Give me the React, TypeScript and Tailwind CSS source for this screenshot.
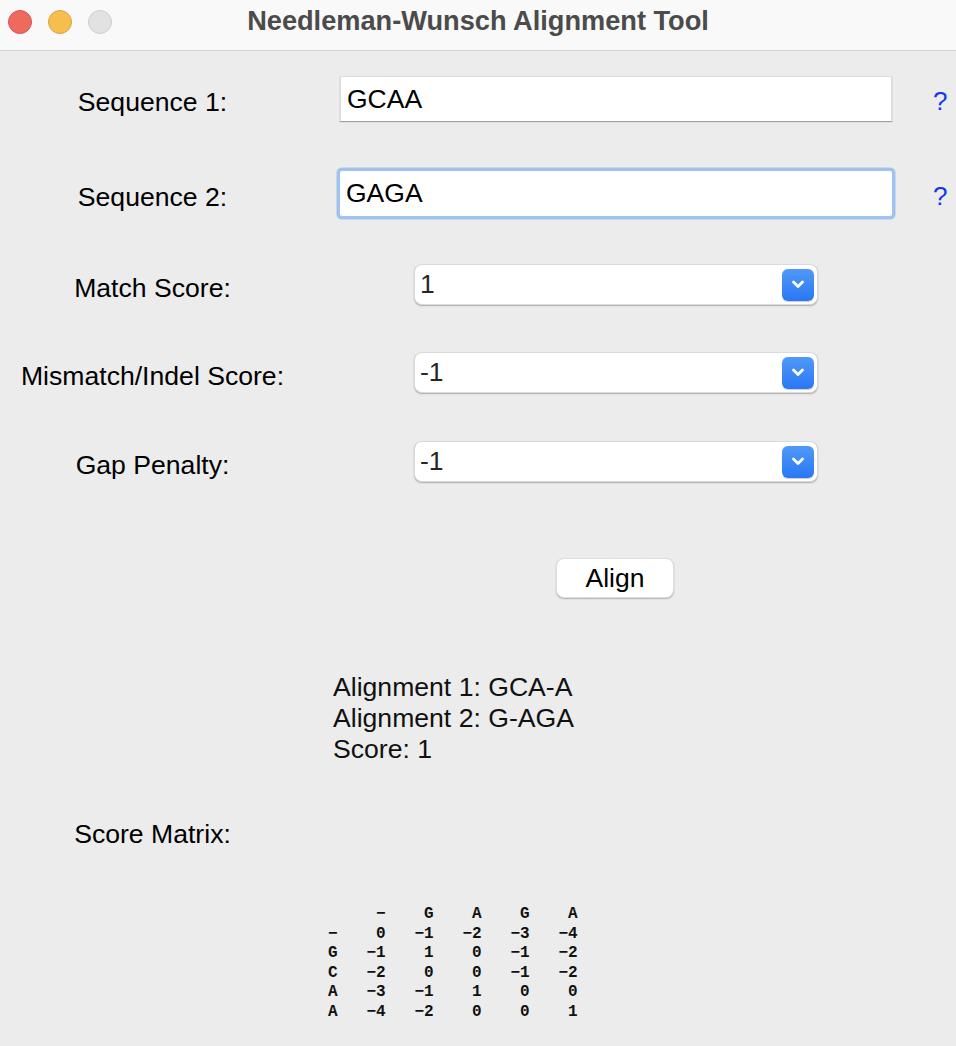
import React from "react";

const SANS = { fontFamily: '"Liberation Sans", Arial, sans-serif' };

function Chevron() {
  return (
    <svg width="14" height="9" viewBox="0 0 14 9" fill="none">
      <path d="M2.5 2 L7 6.5 L11.5 2" stroke="white" strokeWidth="2.8" strokeLinecap="round" strokeLinejoin="round" />
    </svg>
  );
}

function Dropdown({ value }: { value: string }) {
  return (
    <div className="ml-[109px] w-[404px] h-[41px] bg-white rounded-[8px] border border-[#dadada] shadow-[0_1px_1.5px_rgba(0,0,0,0.28)] flex items-center justify-between pl-[5px] pr-[3px]">
      <span className="text-[26.5px] text-[#262626] leading-none">{value}</span>
      <div className="w-[32px] h-[32px] rounded-[6px] bg-gradient-to-b from-[#5099f8] to-[#2a77f4] flex items-center justify-center shadow-[0_0.5px_1px_rgba(0,0,0,0.2)]">
        <Chevron />
      </div>
    </div>
  );
}

function Label({ text }: { text: string }) {
  return (
    <div className="w-[305px] shrink-0 text-center text-[26.6px] text-black pt-[7px] leading-none">{text}</div>
  );
}

const matrix = [
  "     \u2212    G    A    G    A",
  "\u2212    0   \u22121   \u22122   \u22123   \u22124",
  "G   \u22121    1    0   \u22121   \u22122",
  "C   \u22122    0    0   \u22121   \u22122",
  "A   \u22123   \u22121    1    0    0",
  "A   \u22124   \u22122    0    0    1",
];

export default function App() {
  return (
    <div className="w-[956px] h-[1046px] bg-[#ececec] overflow-hidden" style={SANS}>
      {/* Title bar */}
      <div className="h-[51px] bg-[#f9f9f9] border-b border-[#d3d3d3] grid grid-cols-[1fr_auto_1fr] items-center pb-[8px]">
        <div className="flex items-center gap-[16px] pl-[8px] pt-[2px]">
          <div className="w-[24px] h-[24px] rounded-full bg-[#ee6a5f] border border-[#d8564c]" />
          <div className="w-[24px] h-[24px] rounded-full bg-[#f5be4f] border border-[#d9a443]" />
          <div className="w-[24px] h-[24px] rounded-full bg-[#e2e2e2] border border-[#cdcdcd]" />
        </div>
        <div className="text-[27.2px] font-bold text-[#4b4b4b] leading-none">Needleman-Wunsch Alignment Tool</div>
        <div />
      </div>

      {/* Sequence 1 */}
      <div className="mt-[25px] h-[45px] flex items-center">
        <Label text="Sequence 1:" />
        <div className="ml-[35px] w-[552px] h-[45px] bg-white border-t border-x border-[#dcdcdc] shadow-[0_1px_1px_rgba(0,0,0,0.32)] flex items-center pl-[6px]">
          <span className="text-[26.5px] text-black leading-none">GCAA</span>
        </div>
        <span className="ml-[41px] text-[26px] text-[#1238ee] leading-none pt-[4px]">?</span>
      </div>

      {/* Sequence 2 */}
      <div className="mt-[50px] h-[45px] flex items-center">
        <Label text="Sequence 2:" />
        <div className="ml-[35px] w-[552px] h-[45px] bg-white rounded-[2px] shadow-[0_0_0_3.5px_#9fc2ef] flex items-center pl-[6px]">
          <span className="text-[26.5px] text-black leading-none">GAGA</span>
        </div>
        <span className="ml-[41px] text-[26px] text-[#1238ee] leading-none pt-[4px]">?</span>
      </div>

      {/* Match score */}
      <div className="mt-[48px] h-[41px] flex items-center">
        <Label text="Match Score:" />
        <Dropdown value="1" />
      </div>

      <div className="mt-[47px] h-[41px] flex items-center">
        <Label text="Mismatch/Indel Score:" />
        <Dropdown value="-1" />
      </div>

      <div className="mt-[48px] h-[41px] flex items-center">
        <Label text="Gap Penalty:" />
        <Dropdown value="-1" />
      </div>

      {/* Align */}
      <div className="mt-[76px] h-[40px] flex">
        <button className="ml-[556px] w-[118px] h-[40px] bg-white rounded-[8px] border border-[#dedede] shadow-[0_1px_1.5px_rgba(0,0,0,0.25)] text-[26.5px] text-black leading-none">
          Align
        </button>
      </div>

      {/* Results */}
      <div className="mt-[74px] pl-[333px] text-[26.6px] leading-[31px] text-[#111]">
        <div>Alignment 1: GCA-A</div>
        <div>Alignment 2: G-AGA</div>
        <div>Score: 1</div>
      </div>

      {/* Score matrix label */}
      <div className="mt-[54px] h-[31px] flex items-center">
        <div className="w-[305px] text-center text-[26.6px] text-black leading-none">Score Matrix:</div>
      </div>

      {/* Matrix */}
      <pre
        className="mt-[55px] pl-[328px] text-[16px] leading-[19.5px] font-bold text-[#111] whitespace-pre"
        style={{ fontFamily: '"Liberation Mono", "Courier New", monospace' }}
      >
        {matrix.join("\n")}
      </pre>
    </div>
  );
}
